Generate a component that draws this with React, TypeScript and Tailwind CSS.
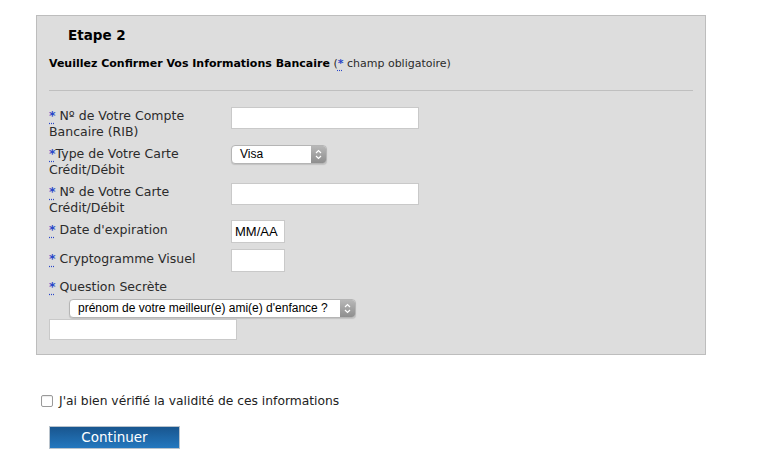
import React from 'react';

const font = { fontFamily: '"DejaVu Sans", Verdana, sans-serif' };

const Req: React.FC = () => (
  <abbr
    title="champ obligatoire"
    className="text-[#2a46c8] font-bold underline decoration-dotted decoration-[#2a46c8] underline-offset-[3px] no-underline-none"
  >
    *
  </abbr>
);

const TextBox: React.FC<{ w: string; h: string; value?: string }> = ({ w, h, value }) => (
  <div
    className={`${w} ${h} bg-white border border-[#c9c9c9] flex items-center px-[3px] text-[13px] text-black font-['Liberation_Sans',Arial,sans-serif]`}
  >
    {value}
  </div>
);

const MacSelect: React.FC<{ w: string; label: string }> = ({ w, label }) => (
  <div
    className={`${w} h-[19px] flex items-stretch rounded-[4px] border border-[#b5b5b5] bg-white overflow-hidden shadow-[0_1px_1px_rgba(0,0,0,0.12)] font-['Liberation_Sans',Arial,sans-serif] text-[12px] text-black`}
  >
    <span className="flex-1 pl-[8px] leading-[17px] whitespace-nowrap overflow-hidden">{label}</span>
    <span className="w-[15px] flex items-center justify-center bg-gradient-to-b from-[#b8b8b8] to-[#8e8e8e]">
      <svg width="7" height="11" viewBox="0 0 7 11">
        <path d="M1 4 L3.5 1.5 L6 4" stroke="white" strokeWidth="1.2" fill="none" />
        <path d="M1 7 L3.5 9.5 L6 7" stroke="white" strokeWidth="1.2" fill="none" />
      </svg>
    </span>
  </div>
);

const Row: React.FC<{ label: React.ReactNode; children: React.ReactNode; className?: string }> = ({ label, children, className }) => (
  <div className={`flex items-start ${className ?? ''}`}>
    <div className="w-[182px] pt-px pr-3 leading-[16px] text-[12.5px] text-[#2b2b2b]">{label}</div>
    {children}
  </div>
);

export default function App() {
  return (
    <div className="min-h-[468px] w-[777px] bg-white pt-[15px]" style={font}>
      <div className="ml-[36px] w-[670px] h-[340px] bg-[#dddddd] border border-[#bdbdbd] px-[12px] pt-[10px]">
        <h2 className="ml-[19px] text-[13.5px] leading-[18px] font-bold text-black">Etape 2</h2>
        <p className="mt-[12px] text-[11px] leading-[15px] text-black">
          <strong>Veuillez Confirmer Vos Informations Bancaire</strong>{' '}
          <span className="text-[#2b2b2b]">
            (<Req /> champ obligatoire)
          </span>
        </p>
        <hr className="mt-[19px] border-0 border-t border-[#bfbfbf]" />

        <div className="mt-[16px] flex flex-col">
          <Row label={<><Req /> Nº de Votre Compte Bancaire (RIB)</>}>
            <TextBox w="w-[188px]" h="h-[22px]" />
          </Row>
          <Row className="mt-[5px]" label={<><Req />Type de Votre Carte Crédit/Débit</>}>
            <MacSelect w="w-[96px]" label="Visa" />
          </Row>
          <Row className="mt-[5px]" label={<><Req /> Nº de Votre Carte Crédit/Débit</>}>
            <TextBox w="w-[188px]" h="h-[22px]" />
          </Row>
          <Row className="mt-[4px]" label={<span className="block pt-[1px]"><Req /> Date d'expiration</span>}>
            <TextBox w="w-[54px]" h="h-[23px]" value="MM/AA" />
          </Row>
          <Row className="mt-[6px]" label={<span className="block pt-[1px]"><Req /> Cryptogramme Visuel</span>}>
            <TextBox w="w-[54px]" h="h-[23px]" />
          </Row>
          <div className="mt-[7px] leading-[16px] text-[12.5px] text-[#2b2b2b]">
            <Req /> Question Secrète
          </div>
          <div className="mt-[4px] ml-[20px]">
            <MacSelect w="w-[287px]" label="prénom de votre meilleur(e) ami(e) d'enfance ?" />
          </div>
          <div className="mt-px">
            <TextBox w="w-[188px]" h="h-[21px]" />
          </div>
        </div>
      </div>

      <label className="mt-[37px] ml-[41px] flex items-center gap-[6px] text-[12.3px] text-[#222]">
        <span className="w-[12px] h-[12px] rounded-[2px] border border-[#9a9a9a] bg-white shadow-[inset_0_1px_1px_rgba(0,0,0,0.08)]" />
        J'ai bien vérifié la validité de ces informations
      </label>

      <button
        type="button"
        className="mt-[16px] ml-[49px] w-[131px] h-[23px] border border-[#b9c3cc] bg-gradient-to-b from-[#19568f] to-[#2478bf] text-white text-[13.5px] leading-[21px] flex items-center justify-center"
      >
        Continuer
      </button>
    </div>
  );
}
